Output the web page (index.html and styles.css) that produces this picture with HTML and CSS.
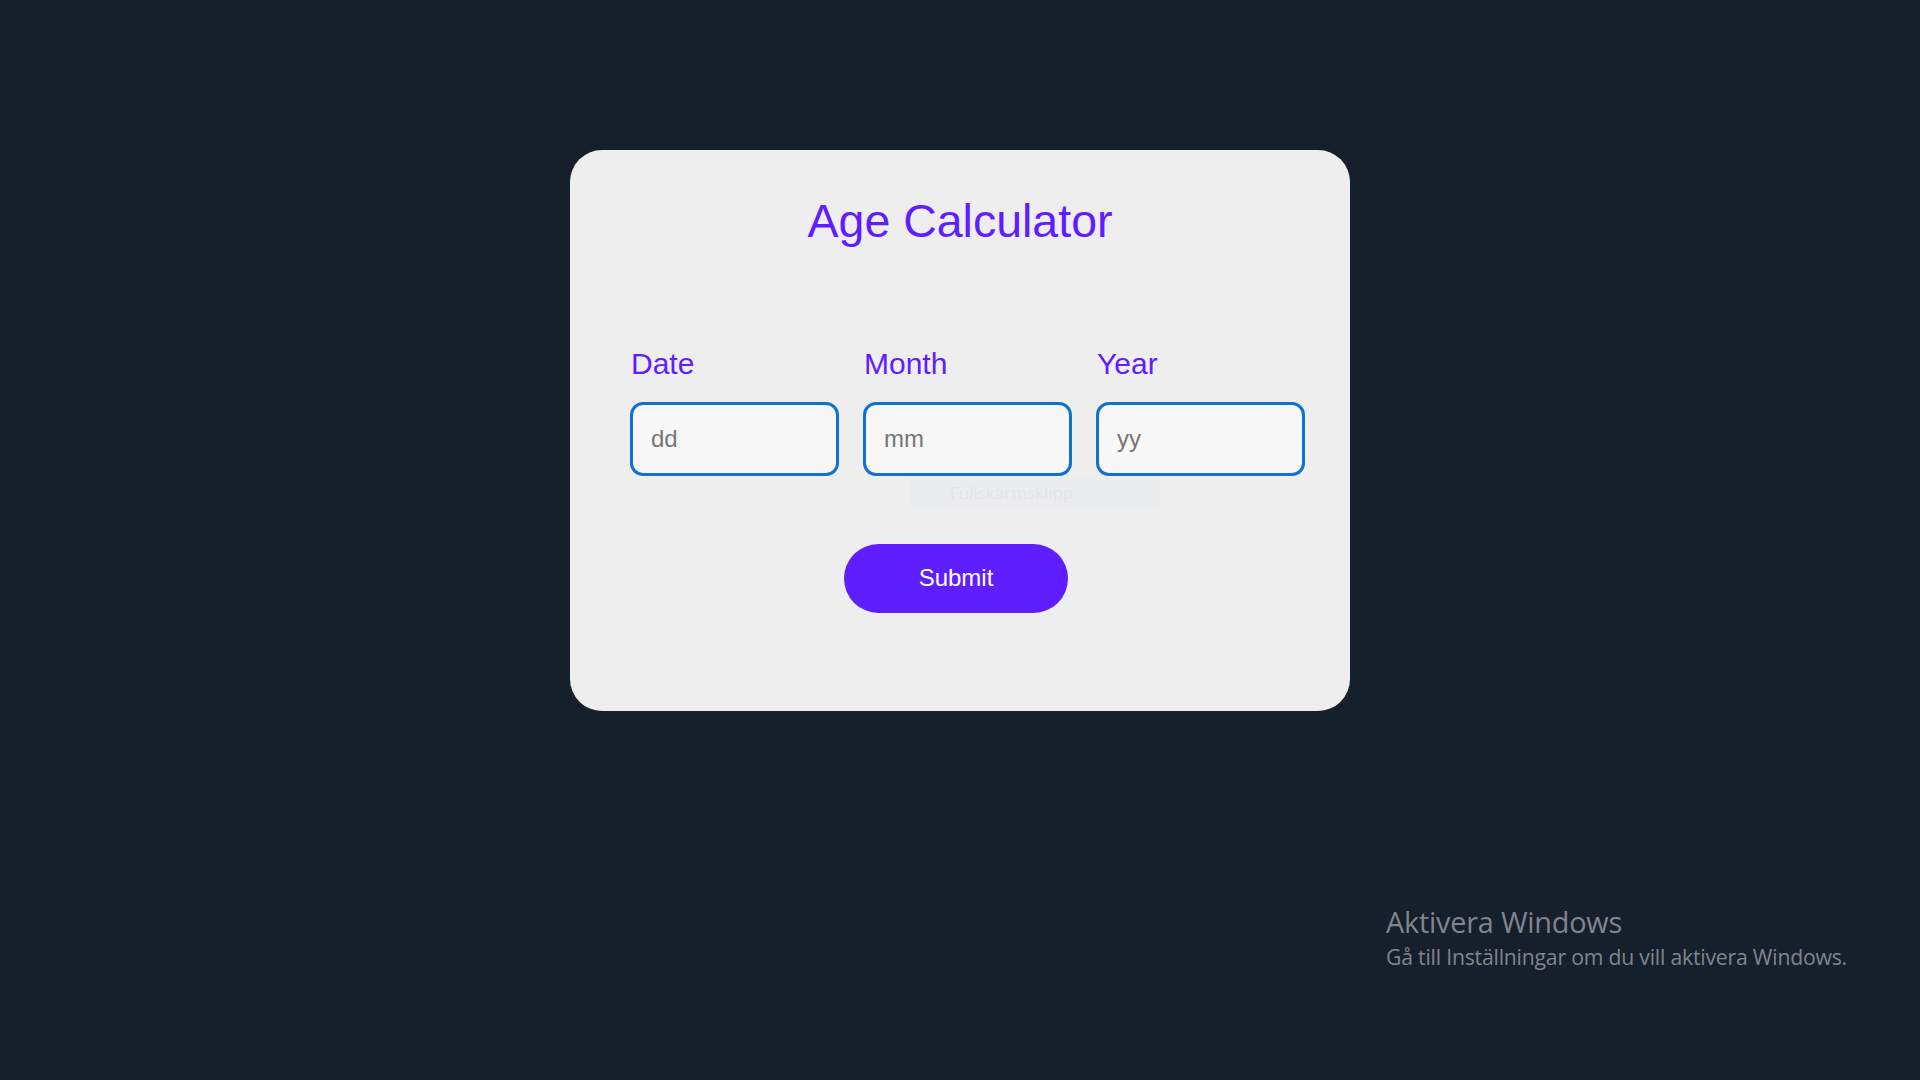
FILE: index.html
```html
<!DOCTYPE html>
<html lang="en">
<head>
<meta charset="utf-8">
<title>Age Calculator</title>
<link rel="stylesheet" href="styles.css">
</head>
<body>
<main class="page">
  <section class="card">
    <h1 class="title">Age Calculator</h1>
    <div class="fields">
      <div class="field">
        <label class="label" for="d">Date</label>
        <input class="input" id="d" type="text" placeholder="dd">
      </div>
      <div class="field">
        <label class="label" for="m">Month</label>
        <input class="input" id="m" type="text" placeholder="mm">
      </div>
      <div class="field">
        <label class="label" for="y">Year</label>
        <input class="input" id="y" type="text" placeholder="yy">
      </div>
    </div>
    <div class="actions">
      <button class="submit" type="button">Submit</button>
    </div>
    <div class="snip-tip">Fullskärmsklipp</div>
  </section>
  <div class="watermark">
    <div class="wm-title">Aktivera Windows</div>
    <div class="wm-sub">Gå till Inställningar om du vill aktivera Windows.</div>
  </div>
</main>
</body>
</html>
```
FILE: styles.css
```css
* { box-sizing: border-box; }
html, body {
  margin: 0;
  padding: 0;
  width: 1920px;
  height: 1080px;
  overflow: hidden;
  background: #161f2c;
  font-family: "Liberation Sans", Arial, sans-serif;
}
.page {
  position: relative;
  width: 1920px;
  height: 1080px;
  padding-top: 150px;
}
.card {
  position: relative;
  width: 780px;
  margin: 0 auto;
  background: #eeeeee;
  border-radius: 32px;
  padding: 48px 45px 98px 60px;
}
.title {
  margin: 0 -45px 0 -60px;
  font-weight: normal;
  font-size: 46.5px;
  line-height: 1;
  text-align: center;
  color: #5f1eff;
}
.fields {
  display: flex;
  gap: 24px;
  margin-top: 104px;
}
.field {
  display: flex;
  flex-direction: column;
  width: 209px;
}
.label {
  display: block;
  font-size: 30px;
  line-height: 30px;
  color: #5f1eff;
  padding-left: 1px;
  margin-bottom: 23px;
}
.input {
  width: 209px;
  height: 74px;
  border: 3px solid #0f72d2;
  border-radius: 13px;
  background: #f7f7f7;
  padding: 0 0 0 18px;
  font-family: "Liberation Sans", Arial, sans-serif;
  font-size: 24px;
  color: #333;
  outline: none;
}
.input::placeholder { color: #767676; }
.actions {
  display: flex;
  justify-content: center;
  margin: 68px -45px 0 -60px;
  padding-right: 8px;
}
.submit {
  width: 224px;
  height: 69px;
  border: none;
  border-radius: 35px;
  background: #5f1eff;
  color: #ffffff;
  font-family: "Liberation Sans", Arial, sans-serif;
  font-size: 24px;
  cursor: pointer;
}
.snip-tip {
  position: absolute;
  left: 340px;
  top: 328px;
  width: 250px;
  height: 30px;
  background: #ebecee;
  color: #e3e4e6;
  font-family: "Open Sans", "Noto Sans", sans-serif;
  font-size: 17px;
  line-height: 30px;
  padding-left: 40px;
}
.watermark {
  position: absolute;
  left: 1386px;
  top: 903px;
  color: #80858c;
  font-family: "Open Sans", "Noto Sans", sans-serif;
}
.wm-title {
  font-size: 28.8px;
  line-height: 38px;
  letter-spacing: -0.2px;
}
.wm-sub {
  font-size: 21.2px;
  line-height: 32px;
  letter-spacing: -0.2px;
}
```
